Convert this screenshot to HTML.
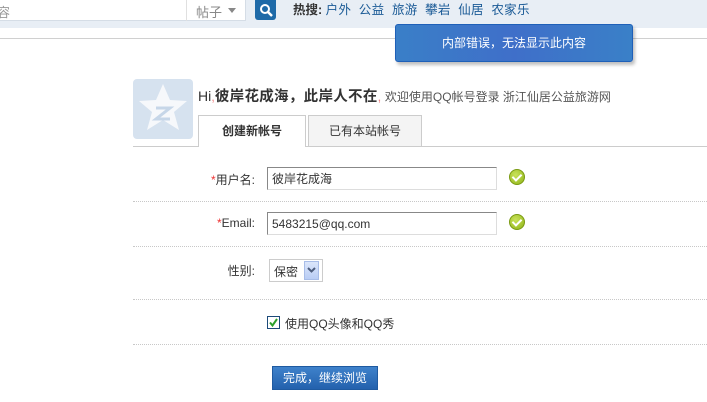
<!DOCTYPE html>
<html><head><meta charset="utf-8"><style>
*{margin:0;padding:0;box-sizing:border-box}
body{width:707px;height:402px;overflow:hidden;background:#fff;font-family:"Liberation Sans","Noto Sans CJK SC",sans-serif;font-size:12px;color:#333;position:relative}
.a{position:absolute}
.topbar{left:0;top:0;width:707px;height:28px;background:#e8eef5}
.dl{border-top:1px dotted #c8c8c8;left:133px;width:574px;height:0}
.lbl{width:122px;text-align:right;left:133px;font-size:12px;color:#333}
.inp{border:1px solid #ddd;border-top-color:#888;border-left-color:#888;background:#fff;height:23px;font-size:12px;padding:4px 4px;line-height:14px}
.ok{width:16px;height:16px;border-radius:50%;background:radial-gradient(circle at 40% 35%,#c9e25a,#8fb418);border:1px solid #7a9a12}
.ok:after{content:"";position:absolute;left:4px;top:2px;width:4px;height:7px;border:solid #fff;border-width:0 2px 2px 0;transform:rotate(45deg)}
</style></head><body>
<div class="a topbar"></div>
<div class="a" style="left:0;top:0;width:246px;height:21px;background:#fff;border:1px solid #d5dde6;border-top:none;border-left:none"></div>
<div class="a" style="left:-3px;top:2px;font-size:13px;color:#999">容</div>
<div class="a" style="left:186px;top:0;width:1px;height:21px;background:#e0e0e0"></div>
<div class="a" style="left:196px;top:2px;font-size:13px;color:#888">帖子</div>
<div class="a" style="left:228px;top:8px;border:4px solid transparent;border-top:5px solid #888"></div>
<div class="a" style="left:255px;top:0;width:21px;height:20px;background:#1e6aa8;border-radius:0 0 3px 3px"></div>
<svg class="a" style="left:258px;top:2px" width="16" height="16"><circle cx="7" cy="7" r="4" fill="none" stroke="#fff" stroke-width="2"/><path d="M10 10l4 4" stroke="#fff" stroke-width="2.5"/></svg>
<div class="a" style="left:293px;top:-1px;font-size:12.5px;color:#333;white-space:nowrap"><b>热搜:</b> <span style="color:#1a5a96;letter-spacing:0.3px">户外 &nbsp;公益 &nbsp;旅游 &nbsp;攀岩 &nbsp;仙居 &nbsp;农家乐</span></div>
<div class="a" style="left:0;top:38px;width:707px;height:1px;background:#d0d0d0"></div>
<div class="a" style="left:395px;top:24px;width:238px;height:38px;background:linear-gradient(90deg,#3a7fc8,#3f6fc9 50%,#3a80c8);border:1px solid #1f60b8;border-radius:3px;box-shadow:2px 3px 3px rgba(0,0,0,.25);color:#fff;text-align:center;line-height:36px;font-size:12px">内部错误，无法显示此内容</div>
<div class="a" style="left:133px;top:79px;width:60px;height:60px;background:#d6e2ef;border-radius:4px"></div>
<svg class="a" style="left:133px;top:79px" width="60" height="60"><path d="M30 5l7 16 17 1-13 11 5 18-16-10-16 10 5-18-13-11 17-1z" fill="#f6f8fb"/><path d="M23 29h14l-14 11h14" stroke="#c6d6e8" stroke-width="3" fill="none"/></svg>
<div class="a" style="left:198px;top:85px;font-size:13px;white-space:nowrap"><span style="color:#333;font-size:14px">Hi</span><span style="color:#e88">,</span><b style="font-size:14.5px;letter-spacing:0.3px">彼岸花成海，此岸人不在</b><span style="color:#e88">,</span> <span style="font-size:12px;color:#555">欢迎使用QQ帐号登录 浙江仙居公益旅游网</span></div>
<div class="a" style="left:133px;top:146px;width:574px;height:1px;background:#ccc"></div>
<div class="a" style="left:198px;top:115px;width:108px;height:32px;background:#fff;border:1px solid #ccc;border-bottom:none;text-align:center;line-height:31px;font-weight:bold;font-size:12px">创建新帐号</div>
<div class="a" style="left:308px;top:115px;width:114px;height:31px;background:#f4f4f4;border:1px solid #ccc;border-bottom:none;text-align:center;line-height:31px;font-size:12px">已有本站帐号</div>
<div class="a lbl" style="top:171px"><span style="color:#e33">*</span>用户名:</div>
<div class="a inp" style="left:267px;top:167px;width:230px">彼岸花成海</div>
<div class="a ok" style="left:509px;top:169px"></div>
<div class="a dl" style="top:201px"></div>
<div class="a lbl" style="top:216px"><span style="color:#e33">*</span>Email:</div>
<div class="a inp" style="left:267px;top:212px;width:230px">5483215@qq.com</div>
<div class="a ok" style="left:509px;top:214px"></div>
<div class="a dl" style="top:246px"></div>
<div class="a lbl" style="top:262px">性别:</div>
<div class="a" style="left:269px;top:259px;width:54px;height:23px;border:1px solid #ccc;background:#fff"></div>
<div class="a" style="left:274px;top:263px;font-size:12px">保密</div>
<div class="a" style="left:304px;top:261px;width:15px;height:19px;background:linear-gradient(#dbe6fb,#b9cdf5);border:1px solid #a8bde8"></div>
<svg class="a" style="left:306px;top:266px" width="11" height="8"><path d="M2 2l3.5 3.5L9 2" stroke="#4d5d7d" stroke-width="2" fill="none"/></svg>
<div class="a dl" style="top:299px"></div>
<div class="a" style="left:267px;top:316px;width:13px;height:13px;border:1px solid #1c4a7a;background:#fff"></div>
<svg class="a" style="left:268px;top:317px" width="11" height="11"><path d="M2 5.5l2.5 3L9 2" stroke="#2ca02c" stroke-width="2" fill="none"/></svg>
<div class="a" style="left:285px;top:315px;font-size:12px;color:#333">使用QQ头像和QQ秀</div>
<div class="a dl" style="top:344px"></div>
<div class="a" style="left:272px;top:366px;width:106px;height:24px;background:linear-gradient(#3f82cb,#2361ad);border:1px solid #1f5aa0;color:#fff;text-align:center;line-height:22px;font-size:12px">完成，继续浏览</div>
</body></html>
